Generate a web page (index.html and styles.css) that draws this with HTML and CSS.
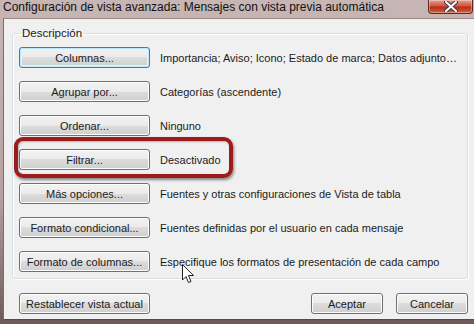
FILE: index.html
```html
<!DOCTYPE html>
<html lang="es">

<head>
    <meta charset="UTF-8">
    <title>Configuración de vista avanzada</title>
    <link rel="stylesheet" href="styles.css">
</head>

<body>

    <div class="window">
        <div class="titlebar">
            <span class="title">Configuración de vista avanzada: Mensajes con vista previa automática</span>
            <span class="close_btn">
                <svg width="14" height="11" viewBox="0 0 14 11">
                    <path d="M2 1 L12 10 M12 1 L2 10" stroke="#3a3a4a" stroke-width="4" stroke-linecap="round"/>
                    <path d="M2 1 L12 10 M12 1 L2 10" stroke="#ffffff" stroke-width="2" stroke-linecap="round"/>
                </svg>
            </span>
        </div>

        <div class="client">
            <fieldset class="group">
                <legend>Descripción</legend>
                <div class="rows">
                    <button class="btn default">Columnas...</button>
                    <span class="desc">Importancia; Aviso; Icono; Estado de marca; Datos adjunto…</span>

                    <button class="btn">Agrupar por...</button>
                    <span class="desc">Categorías (ascendente)</span>

                    <button class="btn">Ordenar...</button>
                    <span class="desc">Ninguno</span>

                    <button class="btn">Filtrar...</button>
                    <span class="desc">Desactivado</span>

                    <button class="btn">Más opciones...</button>
                    <span class="desc">Fuentes y otras configuraciones de Vista de tabla</span>

                    <button class="btn">Formato condicional...</button>
                    <span class="desc">Fuentes definidas por el usuario en cada mensaje</span>

                    <button class="btn">Formato de columnas...</button>
                    <span class="desc">Especifique los formatos de presentación de cada campo</span>
                </div>
            </fieldset>

            <div class="footer">
                <button class="btn">Restablecer vista actual</button>
                <div class="footer_right">
                    <button class="btn small">Aceptar</button>
                    <button class="btn small">Cancelar</button>
                </div>
            </div>

            <div class="highlight"></div>

            <svg class="cursor" width="13" height="20" viewBox="0 0 13 20">
                <path d="M0.5 0.5 L0.5 16 L4 12.5 L6.5 18.5 L9 17.5 L6.5 11.5 L11.5 11.5 Z" fill="#ffffff" stroke="#222222" stroke-width="1"/>
            </svg>
        </div>
    </div>

</body>

</html>
```

FILE: styles.css
```css
* {
    box-sizing: border-box;
}

body {
    margin: 0;
    font-family: "Liberation Sans", Arial, sans-serif;
    font-size: 11px;
    color: #1b1b1b;
    background: #7a6766;
}

.window {
    width: 474px;
    height: 324px;
    display: flex;
    flex-direction: column;
    padding: 0 0 4px 3px;
    background: linear-gradient(#c8b6b5, #b7a2a0 60%, #6e5a58);
    overflow: hidden;
}

.titlebar {
    height: 18px;
    display: flex;
    justify-content: space-between;
    align-items: flex-start;
}

.title {
    font-size: 12px;
    line-height: 14px;
    color: #111;
    white-space: nowrap;
}

.close_btn {
    width: 45px;
    height: 14px;
    margin-right: 1px;
    display: flex;
    justify-content: center;
    align-items: center;
    border: 1px solid #5c2a24;
    border-top: none;
    border-radius: 0 0 4px 4px;
    background: linear-gradient(#e6a08f, #d1553f 45%, #b72d1b 55%, #d4603a);
    box-shadow: inset 0 0 0 1px rgba(255, 255, 255, 0.35);
}

.client {
    position: relative;
    flex: 1;
    background: #f0f0f0;
    border-left: 1px solid #7f6c6a;
    border-top: 1px solid #9d8987;
    border-bottom: 1px solid #5b4846;
    padding: 7px 6px 5px 8px;
    display: flex;
    flex-direction: column;
}

.group {
    margin: 0;
    padding: 7px 0 6px 6px;
    border: 1px solid #d5dfe5;
    border-radius: 3px;
    box-shadow: inset 1px 1px 0 #ffffff, 1px 1px 0 #ffffff;
}

.group legend {
    padding: 0 2px;
    margin-left: 1px;
    line-height: 14px;
    font-size: 11.5px;
}

.rows {
    display: grid;
    grid-template-columns: 131px 1fr;
    column-gap: 10px;
    row-gap: 13px;
    align-items: center;
}

.desc {
    white-space: nowrap;
}

.btn {
    height: 21px;
    padding: 0;
    font-family: inherit;
    font-size: 11px;
    color: #1b1b1b;
    border: 1px solid #707070;
    border-radius: 3px;
    background: linear-gradient(#f2f2f2, #ebebeb 50%, #dddddd 50%, #cfcfcf);
    box-shadow: inset 0 0 0 1px #fcfcfc;
    white-space: nowrap;
}

.default {
    border-color: #3c7fb1;
    box-shadow: inset 0 0 0 1px #bfe7f9, inset 0 0 0 2px #e5f4fc;
}

.footer {
    margin-top: 14px;
    padding-left: 7px;
    display: flex;
    justify-content: space-between;
}

.footer .btn {
    width: 131px;
}

.footer_right {
    display: flex;
    gap: 13px;
}

.footer .small {
    width: 72px;
}

.highlight {
    position: absolute;
    left: 10px;
    top: 118px;
    width: 219px;
    height: 41px;
    border: 4px solid #9c1b1b;
    border-radius: 9px;
    box-shadow: 1px 2px 3px rgba(0, 0, 0, 0.45), inset 1px 1px 2px rgba(0, 0, 0, 0.25);
    pointer-events: none;
}

.cursor {
    position: absolute;
    left: 178px;
    top: 245px;
}
```
